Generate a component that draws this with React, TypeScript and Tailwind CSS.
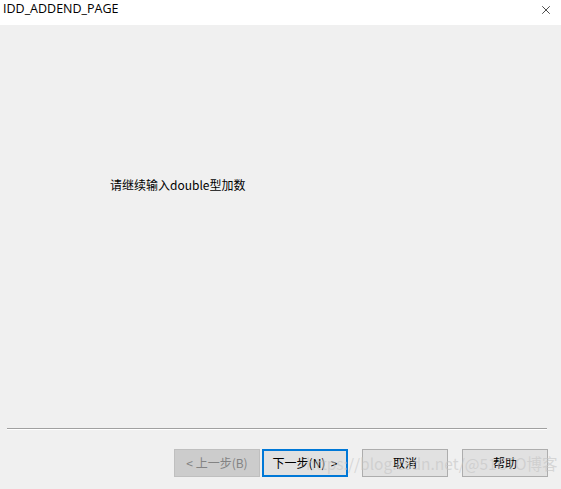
import { X } from 'lucide-react'

const font = { fontFamily: '"Microsoft YaHei UI", "Noto Sans CJK SC", "Noto Sans", sans-serif' }

const Btn = ({ label, disabled, primary }: { label: string; disabled?: boolean; primary?: boolean }) => (
  <button
    className={`w-[86px] h-[28px] text-[12px] flex items-center justify-center whitespace-pre ${
      disabled
        ? 'bg-[#cccccc] border border-[#bfbfbf] text-[#838383]'
        : primary
          ? 'bg-[#e1e1e1] border-2 border-[#0078d7] text-black'
          : 'bg-[#e1e1e1] border border-[#adadad] text-black'
    }`}
  >
    {label}
  </button>
)

export default function App() {
  return (
    <div className="w-[561px] h-[489px] bg-[#f0f0f0] flex flex-col relative overflow-hidden" style={font}>
      <div className="h-[25px] bg-white flex items-center justify-between pl-[3px] pr-[8px]">
        <span className="text-[12.5px] text-black leading-none -mt-[7px]" style={{ fontFamily: '"Open Sans", "Noto Sans", sans-serif' }}>
          IDD_ADDEND_PAGE
        </span>
        <X className="w-[14px] h-[14px] -mt-[6px] text-black" strokeWidth={1.2} />
      </div>

      <div className="flex-1 flex flex-col">
        <div className="pt-[154px] pl-[110px] text-[12px] text-black leading-none">请继续输入double型加数</div>
        <div className="flex-1" />
        <div className="ml-[7px] mr-[14px] border-t border-[#a0a0a0] border-b border-b-white" />
        <div className="flex justify-end pr-[13px] pt-[19px] pb-[12px]">
          <Btn label="< 上一步(B)" disabled />
          <div className="w-[2px]" />
          <Btn label="下一步(N)  >" primary />
          <div className="w-[14px]" />
          <Btn label="取消" />
          <div className="w-[14px]" />
          <Btn label="帮助" />
        </div>
      </div>

      <div className="absolute left-[306px] top-[452px] text-[15.5px] text-[#c4c4c4]/60 pointer-events-none whitespace-nowrap">
        https://blog.csdn.net/@51CTO博客
      </div>
    </div>
  )
}
